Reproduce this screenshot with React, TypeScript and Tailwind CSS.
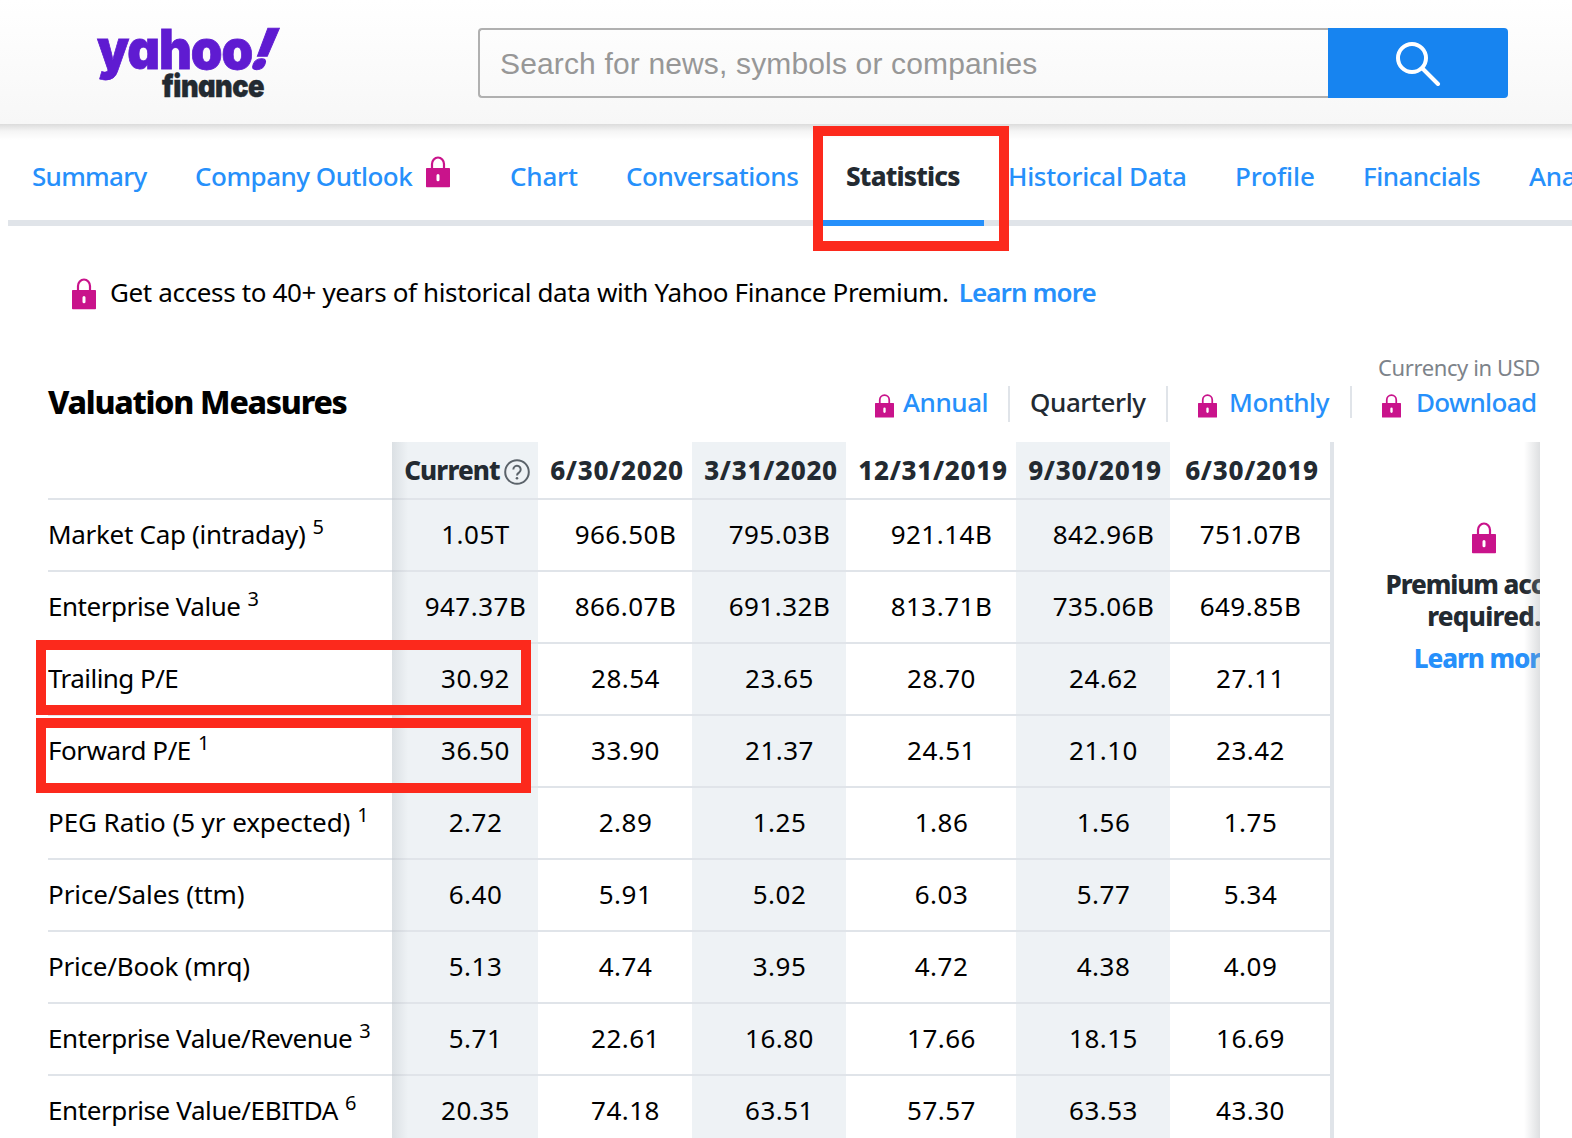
import clsx from 'clsx';

const TABS = [
  { label: 'Summary', size: 'w-[163px] tracking-[-0.7px]' },
  { label: 'Company Outlook', size: 'w-[315px] tracking-[-0.5px]', locked: true },
  { label: 'Chart', size: 'w-[116px] tracking-[-0.2px]' },
  { label: 'Conversations', size: 'w-[220px] tracking-[-0.4px]' },
  { label: 'Statistics', size: 'w-[162px] tracking-[-0.8px]', active: true },
  { label: 'Historical Data', size: 'w-[226px] tracking-[-0.3px]' },
  { label: 'Profile', size: 'w-[128px] pl-[25px] tracking-[-0.1px]' },
  { label: 'Financials', size: 'w-[166px] pl-[25px] tracking-[-0.55px]' },
  { label: 'Analysis', size: 'w-[160px] pl-[25px] tracking-[-0.3px]' },
];

const DATES = ['6/30/2020', '3/31/2020', '12/31/2019', '9/30/2019', '6/30/2019'];

const ROWS = [
  { label: 'Market Cap (intraday)', tracking: 'tracking-[-0.3px]', note: '5', values: ['1.05T', '966.50B', '795.03B', '921.14B', '842.96B', '751.07B'] },
  { label: 'Enterprise Value', tracking: 'tracking-[-0.45px]', note: '3', values: ['947.37B', '866.07B', '691.32B', '813.71B', '735.06B', '649.85B'] },
  { label: 'Trailing P/E', tracking: 'tracking-[-0.55px]', values: ['30.92', '28.54', '23.65', '28.70', '24.62', '27.11'] },
  { label: 'Forward P/E', tracking: 'tracking-[-0.45px]', note: '1', values: ['36.50', '33.90', '21.37', '24.51', '21.10', '23.42'] },
  { label: 'PEG Ratio (5 yr expected)', tracking: 'tracking-[-0.08px]', note: '1', values: ['2.72', '2.89', '1.25', '1.86', '1.56', '1.75'] },
  { label: 'Price/Sales (ttm)', tracking: 'tracking-[-0.1px]', values: ['6.40', '5.91', '5.02', '6.03', '5.77', '5.34'] },
  { label: 'Price/Book (mrq)', tracking: 'tracking-[-0.2px]', values: ['5.13', '4.74', '3.95', '4.72', '4.38', '4.09'] },
  { label: 'Enterprise Value/Revenue', tracking: 'tracking-[-0.42px]', note: '3', values: ['5.71', '22.61', '16.80', '17.66', '18.15', '16.69'] },
  { label: 'Enterprise Value/EBITDA', tracking: 'tracking-[-0.4px]', note: '6', values: ['20.35', '74.18', '63.51', '57.57', '63.53', '43.30'] },
];

const GRID = 'grid grid-cols-[344px_146px_154px_154px_170px_154px_160px]';

function Lock({ className }: { className?: string }) {
  return (
    <svg viewBox="0 0 24 32" preserveAspectRatio="none" className={clsx('shrink-0', className)}>
      <path d="M6 13V8a6 6.500 0 0 1 12 0v5" fill="none" stroke="#c9138b" strokeWidth="2.2" />
      <path
        fill="#c9138b"
        fillRule="evenodd"
        d="M.8 12h22.400a.8.8 0 0 1 .8.8v17.700a.8.8 0 0 1-.8.8H.8a.8.8 0 0 1-.8-.8V12.800a.8.8 0 0 1 .8-.8zM12 18a1.500 1.500 0 0 0-1.500 1.500v4.200a1.500 1.500 0 0 0 3 0v-4.200A1.500 1.500 0 0 0 12 18z"
      />
    </svg>
  );
}

function Logo() {
  return (
    <svg width="190" height="76" viewBox="0 0 190 76" className="shrink-0 overflow-visible">
      <g fontFamily="Inter, sans-serif" fontWeight="900">
        <text
          x="1"
          y="41"
          fontSize="54.500"
          fill="#5f1bd1"
          stroke="#5f1bd1"
          strokeWidth="0.8"
          letterSpacing="-1.2"
          textLength="155"
          lengthAdjust="spacingAndGlyphs"
          style={{ fontFeatureSettings: '"cv11"' }}
        >
          yahoo
        </text>
        <text x="0" y="0" fontSize="56" fill="#5f1bd1" stroke="#5f1bd1" strokeWidth="1" transform="translate(150.500 41) skewX(-22)">
          !
        </text>
        <text
          x="66"
          y="69"
          fontSize="31"
          fill="#232a31"
          stroke="#232a31"
          strokeWidth="0.4"
          letterSpacing="-0.6"
          textLength="102"
          lengthAdjust="spacingAndGlyphs"
          style={{ fontFeatureSettings: '"cv11"' }}
        >
          finance
        </text>
      </g>
    </svg>
  );
}

function Header() {
  return (
    <header className="relative z-10 flex h-[124px] items-start bg-linear-to-b from-white to-[#f7f7f7] pt-7 pl-24">
      <Logo />
      <div className="ml-[192px] flex h-[70px] w-[1030px]">
        <div className="flex flex-1 items-center rounded-l border-2 border-r-0 border-[#b0b0b0] pl-5 font-['Liberation_Sans',Arial,sans-serif] text-[30px] tracking-[0.15px] text-[#979797]">
          Search for news, symbols or companies
        </div>
        <button className="flex w-[180px] items-center justify-center rounded-r bg-[#1784f0]" aria-label="Search">
          <svg width="46" height="46" viewBox="0 0 46 46" fill="none" stroke="white" strokeWidth="4" strokeLinecap="round">
            <circle cx="17" cy="18" r="14" />
            <path d="M27.500 28.500 43 44" />
          </svg>
        </button>
      </div>
      <div className="absolute inset-x-0 top-full h-4 bg-linear-to-b from-black/14 via-black/4 via-45% to-transparent" />
    </header>
  );
}

function Tabs() {
  return (
    <nav className="ml-2 flex h-[102px] w-[1564px] overflow-hidden">
      {TABS.map((tab) => (
        <a
          key={tab.label}
          className={clsx(
            'flex shrink-0 items-center border-b-6 pt-[9px] pl-6 text-[26px] whitespace-nowrap',
            tab.size,
            tab.active ? 'border-[#2690fb] font-extrabold text-[#232a31]' : 'border-[#e0e4e9] font-medium text-[#2690fb]'
          )}
        >
          {tab.label}
          {tab.locked && <Lock className="mb-2.5 ml-3.5 h-8 w-6" />}
        </a>
      ))}
    </nav>
  );
}

function Toolbar() {
  return (
    <div className="flex h-9 items-start text-[26px] leading-[33px] font-medium tracking-[-0.45px] text-[#2690fb]">
      <div className="flex w-[133px]">
        <Lock className="mt-2 mr-[9px] h-6 w-[19px]" />
        Annual
      </div>
      <div className="h-9 w-[158px] border-l-2 border-[#e0e4e9] pl-5 tracking-[-0.4px] text-[#232a31]">Quarterly</div>
      <div className="flex h-9 w-[184px] border-l-2 border-[#e0e4e9] pl-[30px]">
        <Lock className="mt-2 mr-3 h-6 w-[19px]" />
        Monthly
      </div>
      <div className="flex h-8 border-l-2 border-[#e0e4e9] pl-[30px] tracking-[-0.65px]">
        <Lock className="mt-2 mr-[15px] h-6 w-[19px]" />
        Download
      </div>
    </div>
  );
}

function HelpIcon() {
  return (
    <svg width="26" height="26" viewBox="0 0 26 26" fill="none" stroke="#5b636a" strokeWidth="2" className="mt-0.5 ml-1 shrink-0">
      <circle cx="13" cy="13" r="11.800" />
      <path d="M9.300 10.400a3.700 3.700 0 1 1 5.900 3c-1.500 1-2.200 1.500-2.200 3" />
      <circle cx="13" cy="19.300" r="1.300" fill="#5b636a" stroke="none" />
    </svg>
  );
}

function Cell({ index, header, children }: { index: number; header?: boolean; children: React.ReactNode }) {
  return (
    <div
      className={clsx(
        'flex items-center justify-center border-b-2 border-[#e0e4e9]',
        index % 2 === 0 && 'bg-[#eef2f5]',
        header ? 'pt-px pl-1 font-extrabold text-[#232a31]' : 'pb-0.5 tracking-[0.5px]',
        header && (index === 0 ? 'tracking-[-0.85px]' : 'tracking-[0.7px]'),
        !header && (index < 5 ? 'pl-[21px]' : 'pl-px')
      )}
    >
      {children}
    </div>
  );
}

function Table() {
  return (
    <div className="w-[1282px] shrink-0 text-[26px] text-black">
      <div className={clsx(GRID, 'h-[58px]')}>
        <div className="border-b-2 border-[#e0e4e9]" />
        <Cell index={0} header>
          Current
          <HelpIcon />
        </Cell>
        {DATES.map((date, i) => (
          <Cell key={date} index={i + 1} header>
            {date}
          </Cell>
        ))}
      </div>
      {ROWS.map((row) => (
        <div key={row.label} className={clsx(GRID, 'h-[72px]')}>
          <div className={clsx('flex items-center border-b-2 border-[#e0e4e9] pb-0.5 whitespace-nowrap', row.tracking)}>
            {row.label}
            {row.note && <span className="mb-3.5 ml-[7px] text-[20px]">{row.note}</span>}
          </div>
          {row.values.map((value, i) => (
            <Cell key={i} index={i}>
              {value}
            </Cell>
          ))}
        </div>
      ))}
    </div>
  );
}

export default function App() {
  return (
    <div className="h-[1138px] w-[1572px] overflow-hidden bg-white font-['Noto_Sans','Open_Sans',sans-serif]">
      <Header />
      <div className="relative">
        <Tabs />
        <div className="absolute top-[2px] left-[813px] z-20 h-[125px] w-[196px] border-10 border-[#fc291c]" />
      </div>

      <div className="flex h-[134px] items-start pt-[47px] pl-[72px] text-[26px] leading-[38px] text-black">
        <Lock className="mt-[5px] mr-3.5 h-8 w-6" />
        <span className="tracking-[-0.36px]">Get access to 40+ years of historical data with Yahoo Finance Premium.</span>
        <span className="ml-2.5 font-semibold tracking-[-0.9px] text-[#2690fb]">Learn more</span>
      </div>

      <div className="flex h-[82px] justify-between pl-12">
        <h2 className="pt-[23px] text-[32px] leading-[38px] font-extrabold tracking-[-1.25px] text-black">Valuation Measures</h2>
        <div className="w-[697px]">
          <p className="-mt-1.5 pr-8 pb-1.5 text-right text-[22px] leading-[26px] tracking-[-0.4px] text-[#7d838a]">
            Currency in USD
          </p>
          <Toolbar />
        </div>
      </div>

      <div className="relative">
        <div className="relative ml-12 flex h-[706px] w-[1492px] overflow-hidden">
          <Table />
          <aside className="flex w-[304px] shrink-0 flex-col items-center border-l-4 border-[#e0e4e9] pt-20 text-center text-[26px] leading-8 font-extrabold tracking-[-1.1px] text-[#232a31]">
            <Lock className="h-8 w-6" />
            <p className="mt-3.5 w-[220px]">
              Premium access
              <br />
              <span className="tracking-[-0.7px]">required.</span>
            </p>
            <a className="mt-2.5 text-[#2690fb]">Learn more</a>
          </aside>
          {/* scroll shadows */}
          <div className="absolute inset-y-0 left-[344px] w-4 bg-linear-to-r from-[#808890]/17 to-transparent" />
          <div className="absolute inset-y-0 right-0 w-4 bg-linear-to-l from-[#a0a5aa]/35 to-transparent" />
        </div>
        {/* P/E highlights */}
        <div className="absolute top-[198px] left-9 h-[75px] w-[495px] border-10 border-[#fc291c]" />
        <div className="absolute top-[276px] left-9 h-[75px] w-[495px] border-10 border-[#fc291c]" />
      </div>
    </div>
  );
}
